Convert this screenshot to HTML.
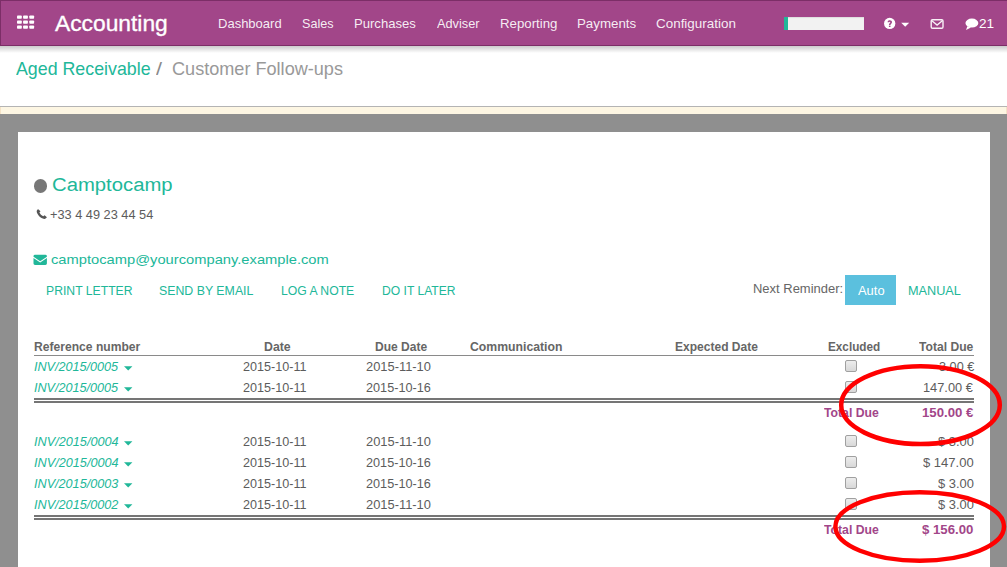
<!DOCTYPE html>
<html><head><meta charset="utf-8"><title>Customer Follow-ups</title>
<style>
html,body{margin:0;padding:0;width:1007px;height:567px;overflow:hidden;background:#fff;font-family:"Liberation Sans",sans-serif;}
.t{position:absolute;white-space:nowrap;transform-origin:0 0;}
.abs{position:absolute;}
#nav{left:0;top:0;width:1010px;height:46px;background:#a24689;border:1px solid #7c2e67;border-right:0;box-sizing:border-box;}
#navshadow{left:0;top:46px;width:1007px;height:7px;background:linear-gradient(rgba(0,0,0,.2),rgba(0,0,0,0));}
#search{left:784px;top:17px;width:80px;height:13px;background:#f2f2f2;box-shadow:inset 0 1px 1px rgba(0,0,0,.08);}
#searchg{left:784px;top:17px;width:4px;height:13px;background:#21b799;}
#topline{left:0;top:106px;width:1007px;height:1px;background:#b4b4b4;}
#yellow{left:0;top:107px;width:1007px;height:7px;background:#fdf6e3;border-left:1px solid #f5e3c6;border-right:1px solid #f5e3c6;box-sizing:border-box;}
#graybg{left:0;top:114px;width:1007px;height:453px;background:#8f8f8f;}
#card{left:18px;top:132px;width:972px;height:435px;background:#fff;}
#dot{left:33.7px;top:179.2px;width:13.4px;height:13.4px;border-radius:50%;background:#777;}
#autobtn{left:845px;top:275px;width:51px;height:30px;background:#5bc0de;}
.hline{left:34px;width:940px;height:1px;background:#8a8a8a;}
.dline{left:34px;width:940px;height:1px;border-top:2px solid #757575;border-bottom:2px solid #757575;}
.cb{width:10px;height:10px;border:1px solid #a0a0a0;border-radius:2px;background:linear-gradient(#ededed,#d8d8d8);}
</style></head>
<body>
<div id="nav" class="abs"></div>
<div id="navshadow" class="abs"></div>
<svg class="abs" style="left:0;top:0" width="1007" height="46">
  <g fill="#fff">
    <rect x="17" y="15.4" width="4.8" height="3.4" rx="0.8"/>
    <rect x="23.1" y="15.4" width="4.8" height="3.4" rx="0.8"/>
    <rect x="29.3" y="15.4" width="4.8" height="3.4" rx="0.8"/>
    <rect x="17" y="20.4" width="4.8" height="3.4" rx="0.8"/>
    <rect x="23.1" y="20.4" width="4.8" height="3.4" rx="0.8"/>
    <rect x="29.3" y="20.4" width="4.8" height="3.4" rx="0.8"/>
    <rect x="17" y="25.4" width="4.8" height="3.4" rx="0.8"/>
    <rect x="23.1" y="25.4" width="4.8" height="3.4" rx="0.8"/>
    <rect x="29.3" y="25.4" width="4.8" height="3.4" rx="0.8"/>
  </g>
  <!-- help icon -->
  <circle cx="889.7" cy="23.45" r="5.65" fill="#fff"/>
  <path d="M887.6 22.3 C887.6 20.9 888.6 20.3 889.8 20.3 C891.1 20.3 892 21 892 22.2 C892 23.6 890.5 23.7 890.5 25 L888.9 25 C888.9 23.2 890.3 23.1 890.3 22.3 C890.3 21.9 890.1 21.7 889.8 21.7 C889.4 21.7 889.2 22 889.2 22.3 Z" fill="#a24689"/>
  <rect x="888.9" y="25.6" width="1.6" height="1.4" fill="#a24689"/>
  <path d="M901.2 22.7 L909.2 22.7 L905.2 26.8 Z" fill="#fff"/>
  <!-- envelope outline -->
  <rect x="931.2" y="19.8" width="11.8" height="8.4" rx="1.3" fill="none" stroke="#fff" stroke-width="1.4" stroke-opacity="0.92"/>
  <path d="M931.9 20.7 L937.1 25.1 L942.3 20.7" fill="none" stroke="#fff" stroke-width="1.3" stroke-opacity="0.92"/>
  <!-- chat bubble -->
  <ellipse cx="971.9" cy="23.1" rx="6.45" ry="4.5" fill="#fff"/>
  <path d="M967.4 26.2 L966 30 L971 27.4 Z" fill="#fff"/>
</svg>
<div id="search" class="abs"></div>
<div id="searchg" class="abs"></div>

<div id="topline" class="abs"></div>
<div id="yellow" class="abs"></div>
<div id="graybg" class="abs"></div>
<div id="card" class="abs"></div>
<div id="dot" class="abs"></div>
<svg class="abs" style="left:0;top:0" width="1007" height="567">
  <!-- phone -->
  <path d="M38.2 209.2 C37.3 209.6 36.6 210.4 36.7 211.6 C37 214.6 40.6 218.6 44.2 218.9 C45.4 219 46.4 218.2 46.9 217.3 L44.6 215.3 L43.2 216.3 C41.6 215.6 40.1 214.1 39.4 212.6 L40.5 211.2 Z" fill="#555"/>
  <!-- envelope filled -->
  <path d="M33.5 256.2 Q33.5 254.8 35 254.8 L45.4 254.8 Q46.9 254.8 46.9 256.2 L46.9 256.8 L40.2 261.2 L33.5 256.8 Z" fill="#21b799"/>
  <path d="M33.5 258 L40.2 262.4 L46.9 258 L46.9 263.5 Q46.9 264.9 45.4 264.9 L35 264.9 Q33.5 264.9 33.5 263.5 Z" fill="#21b799"/>
  <!-- carets -->
  <g fill="#21b799">
    <path d="M124 366.2 L132.4 366.2 L128.2 370.4 Z"/>
    <path d="M124 387.2 L132.4 387.2 L128.2 391.4 Z"/>
    <path d="M124 441.2 L132.4 441.2 L128.2 445.4 Z"/>
    <path d="M124 462.2 L132.4 462.2 L128.2 466.4 Z"/>
    <path d="M124 483.2 L132.4 483.2 L128.2 487.4 Z"/>
    <path d="M124 504.2 L132.4 504.2 L128.2 508.4 Z"/>
  </g>
</svg>
<div id="autobtn" class="abs"></div>
<div class="abs hline" style="top:355px"></div>
<div class="abs dline" style="top:398px"></div>
<div class="abs dline" style="top:515px"></div>
<div class="abs cb" style="left:845px;top:360px"></div>
<div class="abs cb" style="left:845px;top:381px"></div>
<div class="abs cb" style="left:845px;top:435px"></div>
<div class="abs cb" style="left:845px;top:456px"></div>
<div class="abs cb" style="left:845px;top:477px"></div>
<div class="abs cb" style="left:845px;top:498px"></div>
<span class="t" style="left:54.69px;top:12.60px;font-size:22.60px;line-height:22.60px;color:#fff;transform:scaleX(1.0086);-webkit-text-stroke:0.35px #fff;">Accounting</span>
<span class="t" style="left:218.21px;top:17.00px;font-size:13.50px;line-height:13.50px;color:rgba(255,255,255,0.92);transform:scaleX(0.9638);">Dashboard</span>
<span class="t" style="left:302.12px;top:17.00px;font-size:13.50px;line-height:13.50px;color:rgba(255,255,255,0.92);transform:scaleX(0.9342);">Sales</span>
<span class="t" style="left:353.90px;top:17.00px;font-size:13.50px;line-height:13.50px;color:rgba(255,255,255,0.92);transform:scaleX(0.9686);">Purchases</span>
<span class="t" style="left:436.73px;top:17.00px;font-size:13.50px;line-height:13.50px;color:rgba(255,255,255,0.92);transform:scaleX(0.9450);">Adviser</span>
<span class="t" style="left:499.99px;top:17.00px;font-size:13.50px;line-height:13.50px;color:rgba(255,255,255,0.92);transform:scaleX(0.9822);">Reporting</span>
<span class="t" style="left:576.97px;top:17.00px;font-size:13.50px;line-height:13.50px;color:rgba(255,255,255,0.92);transform:scaleX(0.9849);">Payments</span>
<span class="t" style="left:655.96px;top:17.00px;font-size:13.50px;line-height:13.50px;color:rgba(255,255,255,0.92);transform:scaleX(0.9946);">Configuration</span>
<span class="t" style="left:979.25px;top:18.00px;font-size:12.00px;line-height:12.00px;color:#fff;transform:scaleX(1.1290);">21</span>
<span class="t" style="left:15.73px;top:59.80px;font-size:18.60px;line-height:18.60px;color:#21b799;transform:scaleX(0.9572);">Aged Receivable</span>
<span class="t" style="left:155.70px;top:59.80px;font-size:18.60px;line-height:18.60px;color:#8a8a8a;transform:scaleX(1.1625);">/</span>
<span class="t" style="left:171.89px;top:59.80px;font-size:18.60px;line-height:18.60px;color:#999;transform:scaleX(0.9734);">Customer Follow-ups</span>
<span class="t" style="left:51.67px;top:175.10px;font-size:19.20px;line-height:19.20px;color:#21b799;transform:scaleX(1.0573);">Camptocamp</span>
<span class="t" style="left:50.34px;top:207.80px;font-size:13.20px;line-height:13.20px;color:#5c5c5c;transform:scaleX(0.9677);">+33 4 49 23 44 54</span>
<span class="t" style="left:50.68px;top:253.00px;font-size:13.60px;line-height:13.60px;color:#21b799;transform:scaleX(1.0816);">camptocamp@yourcompany.example.com</span>
<span class="t" style="left:45.80px;top:284.20px;font-size:13.20px;line-height:13.20px;color:#21b799;transform:scaleX(0.9251);">PRINT LETTER</span>
<span class="t" style="left:159.24px;top:284.20px;font-size:13.20px;line-height:13.20px;color:#21b799;transform:scaleX(0.9356);">SEND BY EMAIL</span>
<span class="t" style="left:281.10px;top:284.20px;font-size:13.20px;line-height:13.20px;color:#21b799;transform:scaleX(0.9254);">LOG A NOTE</span>
<span class="t" style="left:381.71px;top:284.20px;font-size:13.20px;line-height:13.20px;color:#21b799;transform:scaleX(0.9176);">DO IT LATER</span>
<span class="t" style="left:753.02px;top:282.40px;font-size:13.60px;line-height:13.60px;color:#666;transform:scaleX(0.9545);">Next Reminder:</span>
<span class="t" style="left:857.95px;top:284.20px;font-size:13.60px;line-height:13.60px;color:#fff;transform:scaleX(0.9497);">Auto</span>
<span class="t" style="left:908.42px;top:284.20px;font-size:13.20px;line-height:13.20px;color:#21b799;transform:scaleX(0.9616);">MANUAL</span>
<span class="t" style="left:33.55px;top:339.70px;font-size:13.40px;line-height:13.40px;color:#666;font-weight:700;transform:scaleX(0.9037);">Reference number</span>
<span class="t" style="left:264.42px;top:339.70px;font-size:13.40px;line-height:13.40px;color:#666;font-weight:700;transform:scaleX(0.9188);">Date</span>
<span class="t" style="left:374.75px;top:339.70px;font-size:13.40px;line-height:13.40px;color:#666;font-weight:700;transform:scaleX(0.8974);">Due Date</span>
<span class="t" style="left:469.83px;top:339.70px;font-size:13.40px;line-height:13.40px;color:#666;font-weight:700;transform:scaleX(0.9137);">Communication</span>
<span class="t" style="left:675.46px;top:339.70px;font-size:13.40px;line-height:13.40px;color:#666;font-weight:700;transform:scaleX(0.8983);">Expected Date</span>
<span class="t" style="left:827.66px;top:339.70px;font-size:13.40px;line-height:13.40px;color:#666;font-weight:700;transform:scaleX(0.8775);">Excluded</span>
<span class="t" style="left:918.96px;top:339.70px;font-size:13.40px;line-height:13.40px;color:#666;font-weight:700;transform:scaleX(0.9042);">Total Due</span>
<span class="t" style="left:33.83px;top:359.80px;font-size:13.40px;line-height:13.40px;color:#21b799;font-style:italic;transform:scaleX(0.9417);">INV/2015/0005</span>
<span class="t" style="left:242.57px;top:359.80px;font-size:13.40px;line-height:13.40px;color:#5c5c5c;transform:scaleX(0.9403);">2015-10-11</span>
<span class="t" style="left:365.85px;top:359.80px;font-size:13.40px;line-height:13.40px;color:#5c5c5c;transform:scaleX(0.9623);">2015-11-10</span>
<span class="t" style="left:938.58px;top:359.80px;font-size:13.40px;line-height:13.40px;color:#5c5c5c;transform:scaleX(0.9472);">3.00 €</span>
<span class="t" style="left:33.83px;top:380.80px;font-size:13.40px;line-height:13.40px;color:#21b799;font-style:italic;transform:scaleX(0.9417);">INV/2015/0005</span>
<span class="t" style="left:242.57px;top:380.80px;font-size:13.40px;line-height:13.40px;color:#5c5c5c;transform:scaleX(0.9403);">2015-10-11</span>
<span class="t" style="left:365.87px;top:380.80px;font-size:13.40px;line-height:13.40px;color:#5c5c5c;transform:scaleX(0.9467);">2015-10-16</span>
<span class="t" style="left:923.49px;top:380.80px;font-size:13.40px;line-height:13.40px;color:#5c5c5c;transform:scaleX(0.9561);">147.00 €</span>
<span class="t" style="left:33.82px;top:434.80px;font-size:13.40px;line-height:13.40px;color:#21b799;font-style:italic;transform:scaleX(0.9477);">INV/2015/0004</span>
<span class="t" style="left:242.57px;top:434.80px;font-size:13.40px;line-height:13.40px;color:#5c5c5c;transform:scaleX(0.9403);">2015-10-11</span>
<span class="t" style="left:365.85px;top:434.80px;font-size:13.40px;line-height:13.40px;color:#5c5c5c;transform:scaleX(0.9623);">2015-11-10</span>
<span class="t" style="left:938.29px;top:434.80px;font-size:13.40px;line-height:13.40px;color:#5c5c5c;transform:scaleX(0.9627);">$ 3.00</span>
<span class="t" style="left:33.82px;top:455.80px;font-size:13.40px;line-height:13.40px;color:#21b799;font-style:italic;transform:scaleX(0.9477);">INV/2015/0004</span>
<span class="t" style="left:242.57px;top:455.80px;font-size:13.40px;line-height:13.40px;color:#5c5c5c;transform:scaleX(0.9403);">2015-10-11</span>
<span class="t" style="left:365.87px;top:455.80px;font-size:13.40px;line-height:13.40px;color:#5c5c5c;transform:scaleX(0.9467);">2015-10-16</span>
<span class="t" style="left:923.44px;top:455.80px;font-size:13.40px;line-height:13.40px;color:#5c5c5c;transform:scaleX(0.9716);">$ 147.00</span>
<span class="t" style="left:33.82px;top:476.80px;font-size:13.40px;line-height:13.40px;color:#21b799;font-style:italic;transform:scaleX(0.9433);">INV/2015/0003</span>
<span class="t" style="left:242.57px;top:476.80px;font-size:13.40px;line-height:13.40px;color:#5c5c5c;transform:scaleX(0.9403);">2015-10-11</span>
<span class="t" style="left:365.87px;top:476.80px;font-size:13.40px;line-height:13.40px;color:#5c5c5c;transform:scaleX(0.9467);">2015-10-16</span>
<span class="t" style="left:938.29px;top:476.80px;font-size:13.40px;line-height:13.40px;color:#5c5c5c;transform:scaleX(0.9627);">$ 3.00</span>
<span class="t" style="left:33.82px;top:497.80px;font-size:13.40px;line-height:13.40px;color:#21b799;font-style:italic;transform:scaleX(0.9441);">INV/2015/0002</span>
<span class="t" style="left:242.57px;top:497.80px;font-size:13.40px;line-height:13.40px;color:#5c5c5c;transform:scaleX(0.9403);">2015-10-11</span>
<span class="t" style="left:365.85px;top:497.80px;font-size:13.40px;line-height:13.40px;color:#5c5c5c;transform:scaleX(0.9623);">2015-11-10</span>
<span class="t" style="left:938.29px;top:497.80px;font-size:13.40px;line-height:13.40px;color:#5c5c5c;transform:scaleX(0.9627);">$ 3.00</span>
<span class="t" style="left:823.76px;top:406.00px;font-size:13.60px;line-height:13.60px;color:#a24689;font-weight:700;transform:scaleX(0.9006);">Total Due</span>
<span class="t" style="left:922.21px;top:406.00px;font-size:13.60px;line-height:13.60px;color:#a24689;font-weight:700;transform:scaleX(0.9711);">150.00 €</span>
<span class="t" style="left:823.76px;top:523.10px;font-size:13.60px;line-height:13.60px;color:#a24689;font-weight:700;transform:scaleX(0.9006);">Total Due</span>
<span class="t" style="left:921.73px;top:523.10px;font-size:13.60px;line-height:13.60px;color:#a24689;font-weight:700;transform:scaleX(0.9704);">$ 156.00</span>
<svg class="abs" style="left:0;top:0" width="1007" height="567">
  <ellipse cx="920.5" cy="405.1" rx="79.3" ry="38.9" fill="none" stroke="#ff0000" stroke-width="4.5"/>
  <ellipse cx="919.7" cy="526.5" rx="84.3" ry="34.3" fill="none" stroke="#ff0000" stroke-width="4.5"/>
</svg>
</body></html>
